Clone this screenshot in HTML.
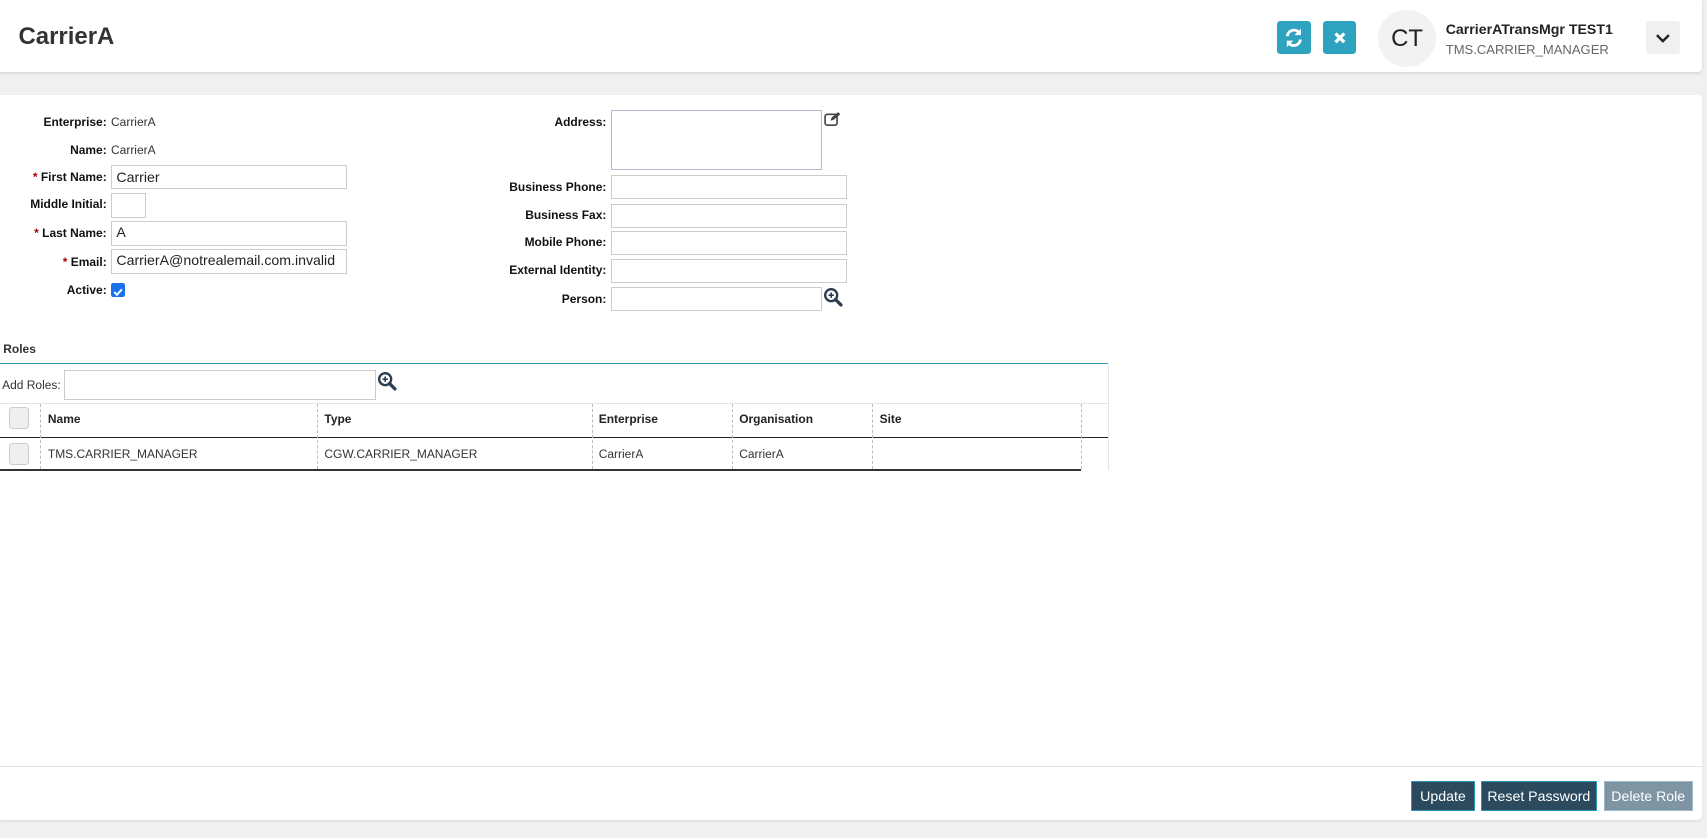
<!DOCTYPE html>
<html><head><meta charset="utf-8"><style>
html,body{margin:0;padding:0;background:#f0f0f0;overflow:hidden}
#w{zoom:1.08865;width:1568px;height:770px;position:relative;font-family:"Liberation Sans",sans-serif;color:#222}
.a{position:absolute;white-space:nowrap}
.hdr{left:0;top:0;width:1563px;height:66px;background:#fff;box-shadow:0 1px 3px rgba(0,0,0,.12);border-radius:0 0 4px 0}
.card{left:0;top:87px;width:1563px;height:666px;background:#fff;border-radius:0 4px 4px 0;box-shadow:0 1px 2px rgba(0,0,0,.08)}
.lb{font-size:11px;font-weight:bold;text-align:right;color:#111}
.v{font-size:11px;color:#333}
.in{border:1px solid #ccc;background:#fff;box-sizing:border-box;font-size:13px;padding:2px 4px;color:#222}
.tb{width:31px;height:31px;border-radius:3px;background:#2ea3bf}
.btn{height:28px;box-sizing:border-box;border:1px solid #2b9ab5;color:#fff;font-size:13px;text-align:center;line-height:26px;background:#2b4a5e}
.th{font-size:11px;font-weight:bold;top:378px}
.td{font-size:11px;top:411px;color:#333}
.dl{border-left:1px dashed #bbb;width:0}
.cb{width:18px;height:18px;border:1px solid #ccc;border-radius:3px;background:#efefef;box-sizing:border-box}
</style></head><body><div id="w">
<div class="a hdr"></div>
<div class="a" style="left:17px;top:21px;font-size:22px;font-weight:bold;color:#333">CarrierA</div>
<div class="a tb" style="left:1173px;top:19px"><svg width="31" height="31" viewBox="0 0 31 31"><path d="M9.5 14a6 6 0 0 1 10.5-3.5M21.5 17a6 6 0 0 1-10.5 3.5" stroke="#fff" stroke-width="2.6" fill="none"/><path d="M22 7v6h-6zM9 24v-6h6z" fill="#fff"/></svg></div>
<div class="a tb" style="left:1215px;top:19px"><svg width="31" height="31"><path d="M11.5 11.5l8 8M19.5 11.5l-8 8" stroke="#fff" stroke-width="3"/></svg></div>
<div class="a" style="left:1266px;top:9px;width:53px;height:53px;border-radius:50%;background:#f2f2f2;font-size:22px;line-height:53px;text-align:center;color:#222">CT</div>
<div class="a" style="left:1328px;top:19px;font-size:13px;font-weight:bold;color:#222">CarrierATransMgr TEST1</div>
<div class="a" style="left:1328px;top:39px;font-size:12px;color:#666">TMS.CARRIER_MANAGER</div>
<div class="a" style="left:1512px;top:19px;width:31px;height:31px;border-radius:3px;background:#f0f0f0"><svg width="31" height="31"><path d="M10 13l5.5 5.5L21 13" stroke="#222" stroke-width="2.2" fill="none"/></svg></div>
<div class="a card"></div>

<div class="a lb" style="left:0;width:98px;top:106px">Enterprise:</div><div class="a v" style="left:102px;top:106px">CarrierA</div>
<div class="a lb" style="left:0;width:98px;top:131px">Name:</div><div class="a v" style="left:102px;top:131px">CarrierA</div>
<div class="a lb" style="left:0;width:98px;top:156px"><span style="color:#a00">*</span> First Name:</div><div class="a in" style="left:102px;top:152px;width:217px;height:22px">Carrier</div>
<div class="a lb" style="left:0;width:98px;top:181px">Middle Initial:</div><div class="a in" style="left:102px;top:177px;width:32px;height:23px"></div>
<div class="a lb" style="left:0;width:98px;top:208px"><span style="color:#a00">*</span> Last Name:</div><div class="a in" style="left:102px;top:203px;width:217px;height:23px">A</div>
<div class="a lb" style="left:0;width:98px;top:234px"><span style="color:#a00">*</span> Email:</div><div class="a in" style="left:102px;top:229px;width:217px;height:23px">CarrierA@notrealemail.com.invalid</div>
<div class="a lb" style="left:0;width:98px;top:260px">Active:</div>
<div class="a" style="left:102px;top:260px;width:13px;height:13px;border-radius:2px;background:#1a73e8"><svg width="13" height="13"><path d="M3 6.5l2.5 2.5L10 4" stroke="#fff" stroke-width="1.8" fill="none"/></svg></div>

<div class="a lb" style="left:400px;width:157px;top:106px">Address:</div><div class="a in" style="left:561px;top:101px;width:194px;height:55px;border-color:#b8b8cc"></div>
<svg class="a" style="left:757px;top:102px" width="16" height="14"><rect x="1" y="3" width="11" height="10" rx="2" fill="none" stroke="#444" stroke-width="1.5"/><path d="M6 9l1-3 6-5 2 2-6 5z" fill="#444"/></svg>
<div class="a lb" style="left:400px;width:157px;top:165px">Business Phone:</div><div class="a in" style="left:561px;top:161px;width:217px;height:22px"></div>
<div class="a lb" style="left:400px;width:157px;top:191px">Business Fax:</div><div class="a in" style="left:561px;top:187px;width:217px;height:22px"></div>
<div class="a lb" style="left:400px;width:157px;top:216px">Mobile Phone:</div><div class="a in" style="left:561px;top:212px;width:217px;height:22px"></div>
<div class="a lb" style="left:400px;width:157px;top:242px">External Identity:</div><div class="a in" style="left:561px;top:238px;width:217px;height:22px"></div>
<div class="a lb" style="left:400px;width:157px;top:268px">Person:</div><div class="a in" style="left:561px;top:264px;width:194px;height:22px"></div>
<svg class="a" style="left:756px;top:264px" width="19" height="19"><circle cx="7.5" cy="7.5" r="5.5" fill="none" stroke="#2b3e50" stroke-width="2.2"/><path d="M5 7.5h5M7.5 5v5" stroke="#2b3e50" stroke-width="1.5"/><path d="M11.5 11.5l5 5" stroke="#2b3e50" stroke-width="3" stroke-linecap="round"/></svg>

<div class="a" style="left:3px;top:314px;font-size:11px;font-weight:bold;color:#333">Roles</div>
<div class="a" style="left:0;top:333px;width:1018px;height:1px;background:#3b98b5"></div>
<div class="a" style="left:1018px;top:334px;width:1px;height:98px;background:#e5e5e5"></div>
<div class="a v" style="left:2px;top:347px;font-size:11px">Add Roles:</div>
<div class="a in" style="left:59px;top:340px;width:286px;height:27px"></div>
<svg class="a" style="left:346px;top:341px" width="19" height="19"><circle cx="7.5" cy="7.5" r="5.5" fill="none" stroke="#2b3e50" stroke-width="2.2"/><path d="M5 7.5h5M7.5 5v5" stroke="#2b3e50" stroke-width="1.5"/><path d="M11.5 11.5l5 5" stroke="#2b3e50" stroke-width="3" stroke-linecap="round"/></svg>
<div class="a" style="left:0;top:370px;width:1018px;height:1px;background:#e5e5e5"></div>
<div class="a" style="left:0;top:401px;width:1018px;height:1px;background:#222"></div>
<div class="a" style="left:0;top:431px;width:993px;height:2px;background:#333"></div>
<div class="a cb" style="left:8px;top:374px;width:19px;height:20px"></div>
<div class="a cb" style="left:8px;top:407px;width:19px;height:20px"></div>
<div class="a dl" style="left:37px;top:371px;height:60px"></div>
<div class="a dl" style="left:291px;top:371px;height:60px"></div>
<div class="a dl" style="left:544px;top:371px;height:60px"></div>
<div class="a dl" style="left:672px;top:371px;height:60px"></div>
<div class="a dl" style="left:801px;top:371px;height:60px"></div>
<div class="a dl" style="left:993px;top:371px;height:60px"></div>
<div class="a th" style="left:44px">Name</div><div class="a th" style="left:298px">Type</div><div class="a th" style="left:550px">Enterprise</div><div class="a th" style="left:679px">Organisation</div><div class="a th" style="left:808px">Site</div>
<div class="a td" style="left:44px">TMS.CARRIER_MANAGER</div><div class="a td" style="left:298px">CGW.CARRIER_MANAGER</div><div class="a td" style="left:550px">CarrierA</div><div class="a td" style="left:679px">CarrierA</div>

<div class="a" style="left:0;top:704px;width:1563px;height:1px;background:#e3e3e3"></div>
<div class="a btn" style="left:1296px;top:717px;width:59px">Update</div>
<div class="a btn" style="left:1360px;top:717px;width:107px">Reset Password</div>
<div class="a btn" style="left:1473px;top:717px;width:82px;background:#7f95a3;border-color:#9bc">Delete Role</div>
</div></body></html>
